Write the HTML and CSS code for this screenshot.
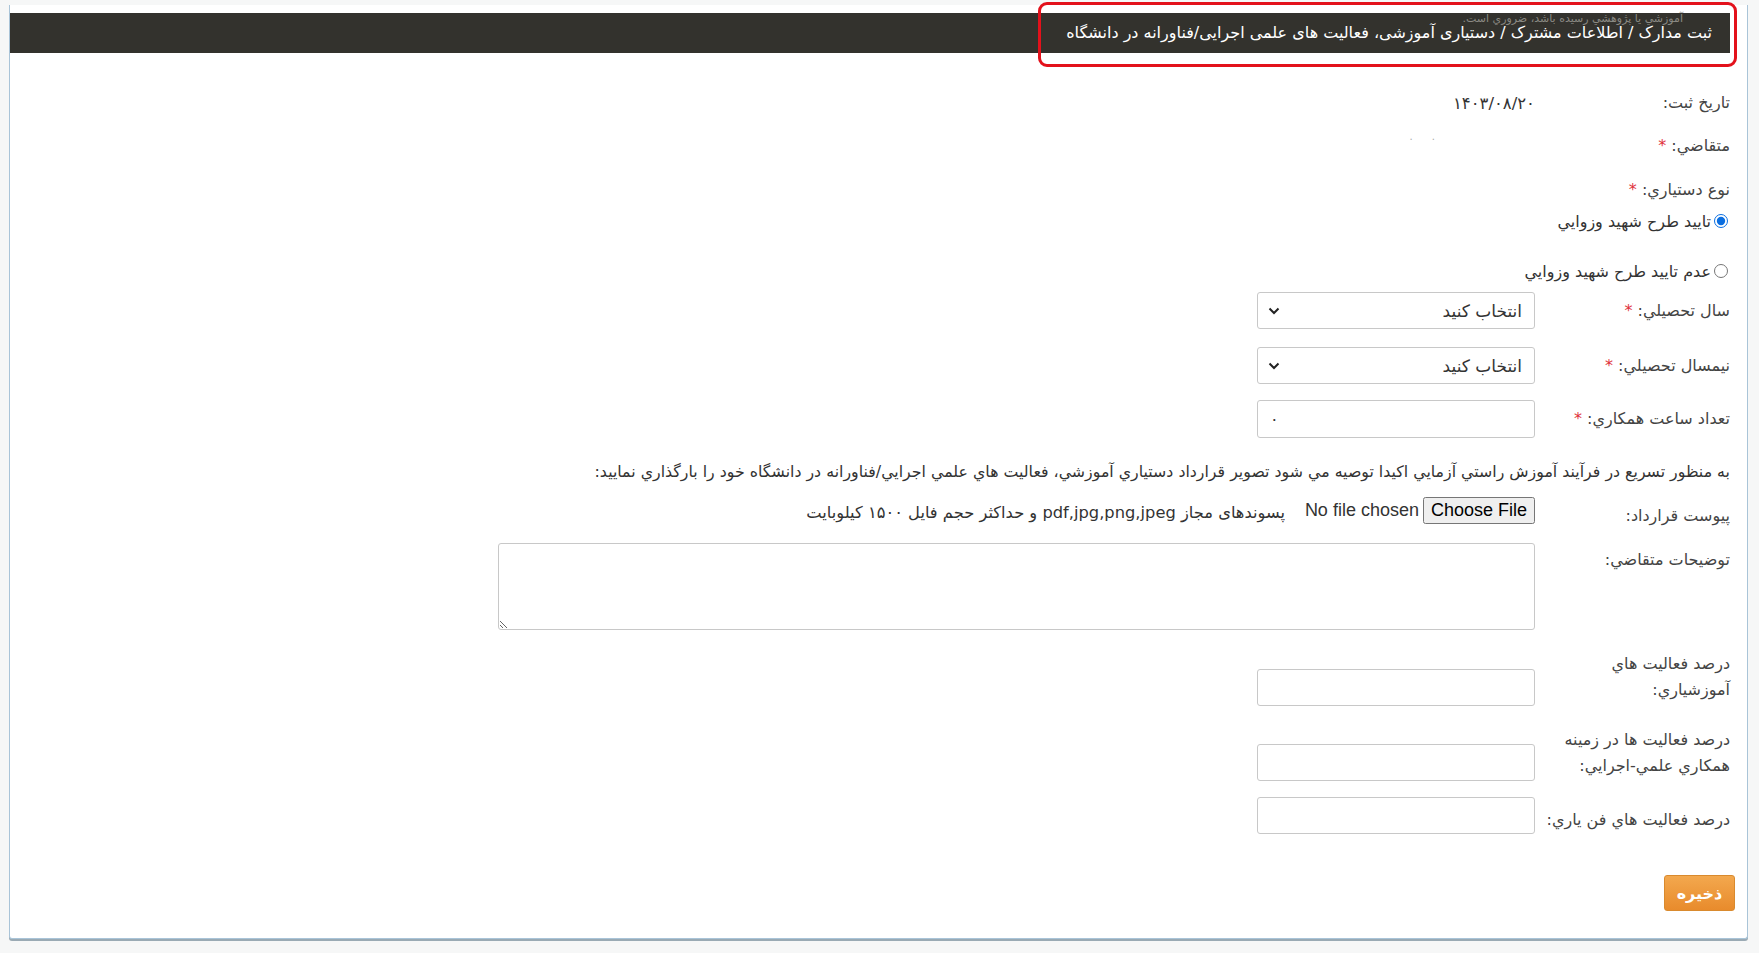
FILE: index.html
```html
<!DOCTYPE html>
<html lang="fa" dir="rtl">
<head>
    <meta charset="UTF-8">
    <meta name="viewport" content="width=device-width, initial-scale=1.0">
    <title>ثبت مدارک</title>
    <link rel="stylesheet" href="styles.css">
</head>
<body>

<div class="card">
    <div class="bar">
        <div class="bar-note">آموزشي يا پژوهشي رسيده باشد، ضروري است.</div>
        <div class="crumbs">ثبت مدارک / اطلاعات مشترک / دستیاری آموزشی، فعالیت های علمی اجرایی/فناورانه در دانشگاه</div>
    </div>

    <form class="form">
        <div class="row row-date">
            <label class="lbl">تاريخ ثبت:</label>
            <div class="field value">۱۴۰۳/۰۸/۲۰</div>
        </div>

        <div class="row row-applicant">
            <label class="lbl">متقاضي: <span class="req">*</span></label>
            <div class="field value dots">. &nbsp;&nbsp;&nbsp;&nbsp; .</div>
        </div>

        <div class="row row-type">
            <label class="lbl lbl-wide">نوع دستياري: <span class="req">*</span></label>
        </div>
        <div class="radio radio-1">
            <input type="radio" name="kind" id="k1" checked>
            <label for="k1">تاييد طرح شهيد وزوايي</label>
        </div>
        <div class="radio radio-2">
            <input type="radio" name="kind" id="k2">
            <label for="k2">عدم تاييد طرح شهيد وزوايي</label>
        </div>

        <div class="row row-year">
            <label class="lbl">سال تحصيلي: <span class="req">*</span></label>
            <div class="field select-wrap">
                <select class="ctl">
                    <option>انتخاب كنيد</option>
                </select>
                <svg class="chev" width="12" height="8" viewBox="0 0 12 8"><path d="M1.5 1.5 L6 6 L10.5 1.5" fill="none" stroke="#222" stroke-width="2"/></svg>
            </div>
        </div>

        <div class="row row-term">
            <label class="lbl">نيمسال تحصيلي: <span class="req">*</span></label>
            <div class="field select-wrap">
                <select class="ctl">
                    <option>انتخاب كنيد</option>
                </select>
                <svg class="chev" width="12" height="8" viewBox="0 0 12 8"><path d="M1.5 1.5 L6 6 L10.5 1.5" fill="none" stroke="#222" stroke-width="2"/></svg>
            </div>
        </div>

        <div class="row row-hours">
            <label class="lbl">تعداد ساعت همكاري: <span class="req">*</span></label>
            <div class="field"><input class="ctl ltr" type="text" value="۰"></div>
        </div>

        <p class="note">به منظور تسريع در فرآيند آموزش راستي آزمايي اكيدا توصيه مي شود تصوير قرارداد دستياري آموزشي، فعاليت هاي علمي اجرايي/فناورانه در دانشگاه خود را بارگذاري نماييد:</p>

        <div class="row row-file">
            <label class="lbl">پيوست قرارداد:</label>
            <div class="file-line">
                <input class="file" type="file">
                <span class="hint">پسوندهای مجاز pdf,jpg,png,jpeg و حداکثر حجم فایل ۱۵۰۰ کیلوبایت</span>
            </div>
        </div>

        <div class="row row-desc">
            <label class="lbl">توضيحات متقاضي:</label>
            <textarea class="area"></textarea>
        </div>

        <div class="row row-pct1">
            <label class="lbl">درصد فعاليت هاي<br>آموزشياري:</label>
            <div class="field"><input class="ctl" type="text"></div>
        </div>

        <div class="row row-pct2">
            <label class="lbl">درصد فعاليت ها در زمينه<br>همكاري علمي-اجرايي:</label>
            <div class="field"><input class="ctl" type="text"></div>
        </div>

        <div class="row row-pct3">
            <label class="lbl">درصد فعاليت هاي فن ياري:</label>
            <div class="field"><input class="ctl" type="text"></div>
        </div>

        <div class="actions">
            <button type="button" class="save">ذخيره</button>
        </div>
    </form>

    <div class="mark"></div>
</div>

</body>
</html>
```

FILE: styles.css
```css
body {
    margin: 0;
    padding: 5px 11px 14px 9px;
    background: #f6f7f7;
    font-family: Tahoma, "DejaVu Sans", sans-serif;
    color: #444;
}

.card {
    position: relative;
    background: white;
    border: 1px solid #a9c4d8;
    border-top: none;
    border-radius: 0 0 3px 3px;
    box-shadow: 0 2px 0 #9aaab4;
    padding-top: 8px;
    height: 934px;
    box-sizing: border-box;
}

.bar {
    background: #33322d;
    height: 40px;
    margin-right: 17px;
    box-sizing: border-box;
    padding-right: 18px;
}
.bar-note {
    height: 9px;
    line-height: 11px;
    font-size: 11px;
    color: #8a8983;
    margin-right: 29px;
}
.crumbs {
    color: white;
    font-size: 16px;
    line-height: 22px;
}

.form {
    padding-right: 17px;
    padding-left: 20px;
    font-size: 16px;
}

.row {
    display: flex;
    align-items: center;
}
.lbl {
    width: 195px;
    flex: none;
    line-height: 26px;
    color: #444;
}
.lbl-wide {
    width: auto;
}
.req {
    color: #e0323c;
}
.field {
    width: 278px;
    position: relative;
}
.value {
    direction: ltr;
    text-align: right;
    color: #333;
    font-size: 16.5px;
}
.dots {
    color: #aaa;
    padding-right: 100px;
    box-sizing: border-box;
    width: 278px;
    font-size: 10px;
    line-height: 10px;
    margin-top: -18px;
}

.row-date { margin-top: 37px; }
.row-applicant { margin-top: 17px; }
.row-type { margin-top: 18px; }

.radio {
    display: flex;
    align-items: center;
    height: 26px;
    font-size: 16px;
    color: #333;
}
.radio input {
    margin: 0 2px 0 3px;
    width: 14px;
    height: 14px;
    accent-color: #0a6ee0;
}
.radio-1 { margin-top: 5px; }
.radio-2 { margin-top: 24px; }

.ctl {
    width: 100%;
    height: 37px;
    box-sizing: border-box;
    border: 1px solid #c8c8c8;
    border-radius: 3px;
    background: white;
    font-family: Tahoma, "DejaVu Sans", sans-serif;
    font-size: 16px;
    color: #333;
    padding: 0 12px;
    display: block;
}
.ltr {
    direction: ltr;
}
select.ctl {
    appearance: none;
    -webkit-appearance: none;
    padding-right: 12px;
    font-size: 17px;
}
.select-wrap .chev {
    position: absolute;
    left: 11px;
    top: 15px;
    pointer-events: none;
}

.row-year { margin-top: 8px; }
.row-term { margin-top: 18px; }
.row-hours { margin-top: 16px; }
.row-hours .ctl { height: 38px; }

.note {
    margin: 21px 0 0;
    line-height: 26px;
    font-size: 15.8px;
    color: #333;
    white-space: nowrap;
}

.row-file { margin-top: 14px; height: 32px; align-items: flex-start; }
.row-file .lbl { padding-top: 4px; }
.file-line {
    display: flex;
    align-items: flex-start;
}
.file {
    font-family: "Liberation Sans", Arial, sans-serif;
    font-size: 18px;
    color: #333;
    width: 240px;
    margin-top: -2px;
}
.hint {
    margin-right: 10px;
    padding-top: 4px;
    font-size: 16.3px;
    color: #333;
    white-space: nowrap;
}

.row-desc { margin-top: 12px; align-items: flex-start; }
.row-desc .lbl { padding-top: 4px; }
.area {
    width: 1037px;
    height: 87px;
    box-sizing: border-box;
    border: 1px solid #c8c8c8;
    border-radius: 3px;
    resize: vertical;
}

.row-pct1 { margin-top: 21px; align-items: flex-start; }
.row-pct1 .field { margin-top: 18px; }
.row-pct2 { margin-top: 21px; align-items: flex-start; }
.row-pct2 .field { margin-top: 17px; }
.row-pct3 { margin-top: 16px; }
.row-pct3 .lbl { padding-top: 8px; }

.actions {
    margin-top: 41px;
    margin-right: -5px;
}
.save {
    width: 71px;
    height: 36px;
    border: 1px solid #d98a2e;
    border-radius: 3px;
    background: linear-gradient(#f3a84e, #e88b2c);
    color: white;
    font-family: Tahoma, "DejaVu Sans", sans-serif;
    font-size: 16px;
    font-weight: bold;
    cursor: pointer;
}

.mark {
    position: absolute;
    top: -3px;
    right: 10px;
    width: 699px;
    height: 65px;
    box-sizing: border-box;
    border: 3px solid #e3111b;
    border-radius: 9px;
}
```
